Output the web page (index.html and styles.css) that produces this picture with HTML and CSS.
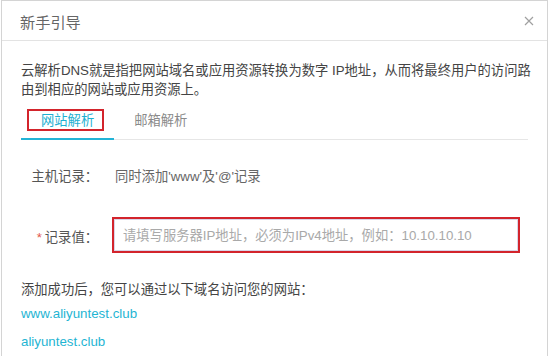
FILE: index.html
```html
<!DOCTYPE html>
<html>
    <head>
        <meta charset='utf-8'>
        <title>新手引导</title>
        <link rel="stylesheet" href="styles.css">
    </head>
    <body>
        <div class='dialog'>
            <div class='dialog-head'>
                <span class='dialog-title'>新手引导</span>
                <svg class='close' width='10' height='10' viewBox='0 0 10 10'>
                    <path d='M1 1L9 9M9 1L1 9' stroke='#a0a0a0' stroke-width='1.2' fill='none'/>
                </svg>
            </div>
            <div class='dialog-body'>
                <p class='intro'>云解析DNS就是指把网站域名或应用资源转换为数字 IP地址，从而将最终用户的访问路由到相应的网站或应用资源上。</p>
                <div class='tabs'>
                    <div class='tab active'><span class='marked'>网站解析</span></div>
                    <div class='tab'>邮箱解析</div>
                </div>
                <div class='form'>
                    <div class='row'>
                        <label class='label'>主机记录：</label>
                        <span class='value'>同时添加'www'及'@'记录</span>
                    </div>
                    <div class='row'>
                        <label class='label'><i class='req'>*</i>记录值：</label>
                        <input class='field' type='text' placeholder='请填写服务器IP地址，必须为IPv4地址，例如：10.10.10.10'>
                    </div>
                </div>
                <p class='note'>添加成功后，您可以通过以下域名访问您的网站：</p>
                <a class='link' href='#'>www.aliyuntest.club</a>
                <a class='link' href='#'>aliyuntest.club</a>
            </div>
        </div>
    </body>
</html>
```

FILE: styles.css
```css
*{
    box-sizing: border-box;
}
body{
    margin: 0;
    font-family: "Liberation Sans", "Noto Sans CJK SC", sans-serif;
    font-size: 13.3px;
    color: #3c3c3c;
    background: #fff;
    overflow: hidden;
}

.dialog{
    width: 547px;
    margin-left: 1px;
    border: 1px solid #d4d4d4;
    border-bottom: none;
}

.dialog-head{
    display: flex;
    align-items: center;
    justify-content: space-between;
    height: 40px;
    padding: 0 13px 0 18px;
    border-bottom: 1px solid #e3e3e3;
}
.dialog-title{
    font-size: 15.2px;
    color: #666;
}

.dialog-body{
    padding: 20px 12px 0 19px;
}
.intro{
    margin: 0;
    line-height: 19px;
    color: #444;
}

.tabs{
    display: flex;
    margin-top: 2px;
    margin-right: 7px;
    border-bottom: 1px solid #e6e6e6;
}
.tab{
    padding: 10px 20px 7px 20px;
    line-height: 20px;
    color: #8a8a8a;
    border-bottom: 2px solid transparent;
    margin-bottom: -1px;
}
.tab.active{
    color: #1eb0d2;
    border-bottom-color: #22b3d6;
}
.marked{
    position: relative;
}
.marked::after{
    content: '';
    position: absolute;
    top: -4px;
    bottom: -3px;
    left: -14px;
    right: -10px;
    border: 2px solid #d3242c;
}

.form{
    margin-top: 17px;
    display: flex;
    flex-direction: column;
    gap: 24px;
}
.row{
    display: flex;
    align-items: center;
    height: 36px;
}
.label{
    width: 77px;
    text-align: right;
    color: #555;
    margin-right: 17px;
    padding-top: 3px;
}
.row:first-child .label{
    padding-top: 0;
}
.req{
    font-style: normal;
    color: #e2574c;
    margin-right: 3px;
}
.value{
    color: #666;
}
.field{
    width: 404px;
    height: 32px;
    margin-left: -1px;
    border: 1px solid #d8d6e8;
    outline: 2px solid #d3242c;
    padding: 0 8px;
    font-family: inherit;
    font-size: 13.3px;
    color: #333;
}
.field::placeholder{
    color: #a9a9a9;
}

.note{
    margin: 27px 0 0 0;
    line-height: 20px;
    color: #444;
}
.link{
    display: block;
    line-height: 28px;
    color: #1fb5d3;
    text-decoration: none;
}
```
